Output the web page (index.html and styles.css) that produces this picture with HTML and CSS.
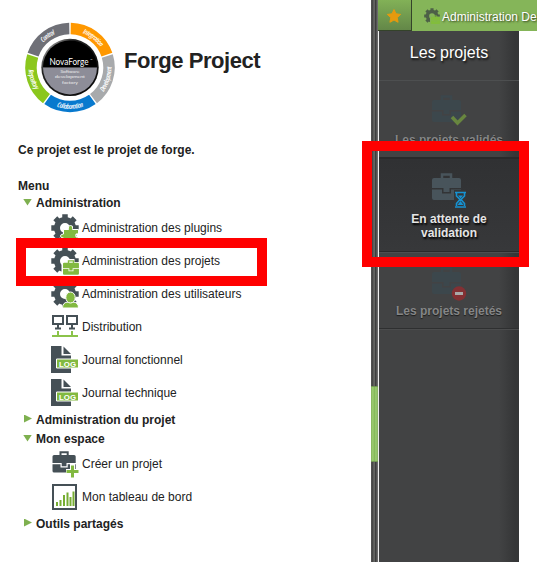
FILE: index.html
```html
<!DOCTYPE html>
<html lang="fr">
<head>
<meta charset="utf-8">
<title>Forge Project</title>
<link rel="stylesheet" href="styles.css">
</head>
<body>
<svg class="defs" aria-hidden="true">
  <defs>
    <g id="gear">
      <circle cx="14" cy="14" r="8" fill="none" stroke="currentColor" stroke-width="6"/>
      <g stroke="currentColor" stroke-width="5.500">
        <path d="M14 .3V5M14 23v4.700M.3 14H5M23 14h4.700M4.300 4.300l3.400 3.400M20.300 20.300l3.400 3.400M4.300 23.700l3.400-3.400M20.300 7.700l3.400-3.400"/>
      </g>
    </g>
    <g id="case">
      <path d="M10 6V1.500h9V6" fill="none" stroke="currentColor" stroke-width="2.500"/>
      <path fill="currentColor" d="M2 5h25q2 0 2 2v8H17.500v4h-6v-4H0V7q0-2 2-2z"/>
      <path fill="currentColor" d="M0 16.500h10v4h9v-4h10V25q0 2-2 2H2q-2 0-2-2z"/>
    </g>
    <g id="log">
      <path fill="#455056" d="M0 0h10.500v9.500H20V27H0z"/>
      <path fill="#455056" d="M12.500 .5L20 8h-7.500z"/>
      <path fill="#82b940" stroke="#fff" d="M5.500 13h22v9h-22z"/>
      <text x="16.500" y="20.500" class="log-text" textLength="17" lengthAdjust="spacingAndGlyphs">LOG</text>
    </g>
  </defs>
</svg>
<div class="app">
  <main class="left">
    <header class="brand">
      <svg class="logo" viewBox="-46 -46.400 92 92">
        <defs>
          <linearGradient id="rim" x1="0" y1="0" x2="1" y2="1"><stop offset="0" stop-color="#ddd"/><stop offset=".3" stop-color="#222"/><stop offset="1" stop-color="#050505"/></linearGradient>
          <path id="top" d="M-36.500 0A36.500 36.500 0 0 1 36.500 0"/>
          <path id="right" d="M0 36.500A36.500 36.500 0 0 0 36.500 0" transform="rotate(0)"/>
          <path id="rightarc" d="M0 41.500A41.500 41.500 0 0 0 41.500 0A41.500 41.500 0 0 0 0 -41.500"/>
          <path id="down" d="M-41.500 0A41.500 41.500 0 0 0 41.500 0"/>
          <path id="leftarc" d="M0 -41.500A41.500 41.500 0 0 0 -41.500 0A41.500 41.500 0 0 0 0 41.500"/>
        </defs>
        <g fill="none" stroke-width="11.500">
          <path stroke="#ff9800" d="M.7 -39A39 39 0 0 1 36.900 -12.700"/>
          <path stroke="#a8aaac" d="M37.300 -11.400A39 39 0 0 1 23.500 31.200"/>
          <path stroke="#0879ce" d="M22.400 32A39 39 0 0 1 -22.400 32"/>
          <path stroke="#8bc71d" d="M-23.500 31.200A39 39 0 0 1 -37.300 -11.400"/>
          <path stroke="#6f7077" d="M-36.900 -12.700A39 39 0 0 1 -.7 -39"/>
        </g>
        <circle r="28.700" fill="url(#rim)"/>
        <path fill="#000" d="M-27 0A27 27 0 0 1 27 0z"/>
        <path fill="#8d8d98" d="M-27 0A27 27 0 0 0 27 0z"/>
        <g class="ring-text">
          <text><textPath href="#top" startOffset="30%">Control</textPath></text>
          <text><textPath href="#top" startOffset="71%">Integration</textPath></text>
          <text><textPath href="#rightarc" startOffset="40%">Development</textPath></text>
          <text><textPath href="#down" startOffset="50%">Collaboration</textPath></text>
          <text><textPath href="#leftarc" startOffset="60%">Repository</textPath></text>
        </g>
        <text class="nova" x="-1" y="-2.500" textLength="39" lengthAdjust="spacingAndGlyphs">NovaForge</text>
        <text class="tm" x="21.500" y="-6">™</text>
        <g class="soft"><text y="5.500" textLength="19" lengthAdjust="spacingAndGlyphs">Software</text><text y="11" textLength="30" lengthAdjust="spacingAndGlyphs">development</text><text y="16.500" textLength="16" lengthAdjust="spacingAndGlyphs">factory</text></g>
      </svg>
      <h1>Forge Project</h1>
    </header>
    <p class="intro">Ce projet est le projet de forge.</p>
    <h2>Menu</h2>
    <ul class="menu">
      <li class="folder"><i class="arrow open"></i>Administration</li>
      <li class="leaf"><svg class="icon" viewBox="0 0 28 28"><use href="#gear"/><path fill="#82b940" stroke="#fff" d="M12.500 15.500h5v-1q-1-3 2-3t2 3v1h6v4.500q-3-1-3 1.500t3 1.500v5h-15v-4q-3 0-3-2t3-2z"/></svg>Administration des plugins</li>
      <li class="leaf"><svg class="icon" viewBox="0 0 28 28"><use href="#gear"/><path fill="#fff" d="M10.500 15h5v-3h8v3H28v13H10.500z"/><g color="#82b940" transform="translate(12 13) scale(.55)"><use href="#case"/></g></svg>Administration des projets</li>
      <li class="leaf"><svg class="icon" viewBox="0 0 28 28"><use href="#gear"/><g fill="#82b940" stroke="#fff"><path d="M11.500 28q0-6 6-6h4q6 0 6 6z"/><ellipse cx="19.500" cy="17.500" rx="4.700" ry="5.500"/></g></svg>Administration des utilisateurs</li>
      <li class="leaf"><svg class="icon" viewBox="0 0 28 28"><g fill="none" stroke="#455056" stroke-width="2"><path d="M2 3h10v8H2zM16 3h10v8H16zM7 11v4M21 11v4M4 15.500h6M18 15.500h6"/></g><path fill="none" stroke="#8bc34a" stroke-width="2" d="M1 23h26M7 18v5M21 18v5"/></svg>Distribution</li>
      <li class="leaf"><svg class="icon" viewBox="0 0 28 28"><use href="#log"/></svg>Journal fonctionnel</li>
      <li class="leaf"><svg class="icon" viewBox="0 0 28 28"><use href="#log"/></svg>Journal technique</li>
      <li class="folder"><i class="arrow"></i>Administration du projet</li>
      <li class="folder"><i class="arrow open"></i>Mon espace</li>
      <li class="leaf"><svg class="icon" viewBox="0 0 28 28"><g color="#455056" transform="translate(1.500 1) scale(.8)"><use href="#case"/></g><path stroke="#fff" stroke-width="5" d="M21.500 14v14M15 21.500h13"/><path stroke="#82b940" stroke-width="3" d="M21.500 15.500v12M15.500 21.500h12"/></svg>Créer un projet</li>
      <li class="leaf"><svg class="icon" viewBox="0 0 28 28"><path fill="#fff" stroke="#455056" stroke-width="2" d="M2 2h23v24H2z"/><path stroke="#76ad32" stroke-width="2" d="M6 23v-4M9.500 23v-6M13 23V12M16.500 23V9.500M19.500 23v-9M22.500 23V8.500"/></svg>Mon tableau de bord</li>
      <li class="folder"><i class="arrow"></i>Outils partagés</li>
    </ul>
  </main>
  <div class="splitter"><div class="grip"></div></div>
  <section class="right">
    <nav class="tabs">
      <div class="star"><svg viewBox="0 0 16 16"><path fill="#e59a0e" stroke="#e59a0e" stroke-linejoin="round" d="M8 1.500l2 4.300 4.700.6-3.500 3.200.9 4.700L8 12l-4.100 2.300.9-4.700L1.300 6.400 6 5.800z"/></svg></div>
      <div class="tab"><svg viewBox="0 0 28 28"><use href="#gear"/><path fill="#83b257" d="M10.500 15H28v13H10.500z"/><g color="#82bd3c" transform="translate(12 13) scale(.55)"><use href="#case"/></g></svg><span>Administration De</span></div>
    </nav>
    <aside class="panel">
      <h3>Les projets</h3>
      <div class="item first"><svg viewBox="0 0 36 36"><g class="case"><use href="#case"/></g><path fill="none" stroke="#68863f" stroke-width="3.500" d="M20 22l5.500 6 8-8"/></svg><span>Les projets validés</span></div>
      <div class="item active"><svg viewBox="0 0 36 36"><g class="case"><use href="#case"/></g><path fill="#343638" d="M22 17h12v18H22z"/><path fill="none" stroke="#1692d2" stroke-width="1.600" d="M23 19.500h11M23 34h11M24.500 20v3l3.500 3.500-3.500 4V33M32.500 20v3L29 26.500l3.500 4V33"/><path fill="#1692d2" d="M26 22.500h5l-2.500 3zM28.500 28l3 4h-6z"/></svg><span>En attente de validation</span></div>
      <div class="item last"><svg viewBox="0 0 36 36"><g class="case"><use href="#case"/></g><circle cx="27" cy="26.500" r="7.200" fill="#833033"/><path fill="#a8a8a8" d="M23 25h8v3h-8z"/></svg><span>Les projets rejetés</span></div>
    </aside>
  </section>
</div>
<div class="mark mark-menu"></div>
<div class="mark mark-panel"></div>
</body>
</html>
```

FILE: styles.css
```css
* { box-sizing: border-box; }
body {
  margin: 0;
  background: #fff;
  color: #222;
  font: 12px/14px "Liberation Sans", Arial, sans-serif;
  overflow: hidden;
}
.defs { position: absolute; width: 0; height: 0; }
.app { display: flex; width: 537px; height: 562px; overflow: hidden; }
.left { width: 371px; padding: 21px 0 0 18px; }
.brand { display: flex; height: 92px; padding-left: 6px; }
.logo { width: 92px; height: 92px; overflow: visible; }
h1 { margin: 25px 0 0 8px; font-size: 22px; line-height: 30px; letter-spacing: -0.43px; }
.intro { margin: 30px 0 22px; font-weight: bold; }
h2 { margin: 0; font-size: 12px; line-height: 14px; }
.menu { margin: 0; padding: 0; list-style: none; }
.folder { display: flex; align-items: center; height: 19px; padding-left: 5px; font-weight: bold; }
.leaf { display: flex; align-items: center; height: 33px; padding: 0 0 2px 33px; }
.icon { width: 28px; height: 28px; margin-right: 3px; color: #455056; }
.arrow { width: 13px; height: 8px; }
.arrow::before {
  content: "";
  display: block;
  width: 8px;
  height: 8px;
  margin: -1px 0 0 1px;
  background: #7eb04f;
  clip-path: polygon(0 0, 100% 50%, 0 100%);
}
.arrow.open::before { width: 9px; height: 7px; margin: 0; clip-path: polygon(0 0, 100% 0, 50% 100%); }
.log-text { fill: #fff; font: bold 8px "Liberation Sans", sans-serif; text-anchor: middle; }
.ring-text { fill: #fff; font: italic 600 7px "Open Sans", sans-serif; font-stretch: condensed; text-anchor: middle; letter-spacing: -.4px; }
.nova { fill: #fff; font: 9px Lato, sans-serif; text-anchor: middle; }
.tm { fill: #ccc; font: 3px Lato, sans-serif; text-anchor: middle; }
.soft { fill: #eee; font: 4.500px Lato, sans-serif; text-anchor: middle; }
.splitter {
  width: 7px;
  height: 562px;
  padding-top: 386px;
  background: linear-gradient(90deg, #555, #454545 25%, #70716e 45%, #3c3c3c 65%, #555 80%, #777);
}
.grip {
  height: 76px;
  border: solid #719653;
  border-width: 1px 0;
  background: linear-gradient(90deg, #83b05b, #9bcc70 25%, #87b95c 50%, #9bcc70 70%, #83ad60);
}
.right { width: 159px; }
.tabs { display: flex; height: 31px; background: #85b559; }
.star {
  width: 34px;
  padding: 8px 0 0 8px;
  border-right: 1px solid #34432a;
  border-bottom: 1px solid #34432a;
  background: linear-gradient(#82b157, #638748);
}
.star svg { display: block; width: 16px; height: 16px; }
.tab { display: flex; flex: 1; padding: 8px 0 0 12px; white-space: nowrap; color: #fff; text-shadow: 1px 1px 2px #344422; }
.tab svg { flex: none; width: 16px; height: 16px; margin-right: 2px; color: #4d6047; }
.tab span { line-height: 18px; }
.panel {
  width: 141px;
  height: 531px;
  border-left: 1px solid #eee;
  background: linear-gradient(90deg, transparent 120px, #353637 136px), #424344;
}
h3 { height: 49px; margin: 0; color: #fff; font-size: 16px; font-weight: normal; line-height: 43px; text-align: center; text-shadow: 1px 2px 2px #151515; }
.item { display: flex; flex-direction: column; align-items: center; padding: 14px 20px 0; text-align: center; font-weight: bold; color: #858687; text-shadow: 0 1px 1px #1c1c1c; }
.item svg { flex: none; width: 36px; height: 36px; margin-left: 2px; }
.case { color: #3c474c; }
.item span { margin-top: 2px; white-space: nowrap; }
.first { height: 77px; border-top: 1px solid #4d4f50; }
.active { height: 95px; border: solid #292a2b; border-width: 2px 0 1px; color: #e5e5e5; background: linear-gradient(#303133, #37383a); }
.active .case { color: #48545b; }
.active span { margin-top: 3px; white-space: normal; text-shadow: 1px 2px 2px #000; }
.last { height: 77px; padding-top: 14px; border-top: 1px solid #4d4f50; border-bottom: 1px solid #2e2f30; box-shadow: 0 1px #4b4c4d; }
.last span { margin-top: 1px; }
/* Highlights laid over the interface */
.mark { position: absolute; border: 10px solid #f00; }
.mark-menu { left: 16px; top: 238px; width: 251px; height: 48px; }
.mark-panel { left: 362px; top: 141px; width: 167px; height: 126px; }
```
